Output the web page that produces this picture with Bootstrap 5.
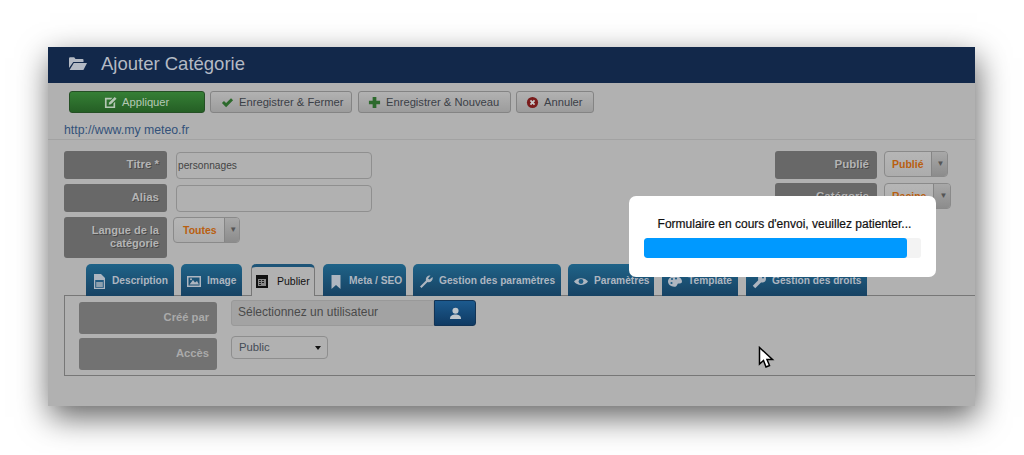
<!doctype html>
<html lang="fr"><head><meta charset="utf-8"><title>Ajouter Catégorie</title>
<link rel="stylesheet" href="https://cdn.jsdelivr.net/npm/bootstrap@5.3.0/dist/css/bootstrap.min.css">
<style>
html,body{height:100%;background:#fff;overflow:hidden}
body{font-family:"Liberation Sans",Arial,sans-serif;font-size:11px;color:#333}
.shot{position:relative;margin:47px 49px 0 48px;height:359px;background:#b1b1b1;box-shadow:2px 11px 30px rgba(0,0,0,.62)}
.head{height:36px;background:#12284a;color:#b4bac4;font-size:18.5px;padding-left:21px;gap:14px}
.head svg{width:18px;height:15px;margin-top:-4px}
.head span{margin-top:-3px}
.bar{padding:8px 21px 0;gap:5px;height:30px}
.tbtn{height:22px;padding:0 9px;font-size:11.2px;line-height:20px;border:1px solid #848484;border-radius:3px;background:linear-gradient(#b2b2b2,#9c9c9c);color:#3b4047;gap:5px;white-space:nowrap}
.tbtn svg{width:13px;height:13px;flex:none}
.tgreen{width:136px;padding-left:34px;background:linear-gradient(#357f35,#255f25);border-color:#255025;color:#b5c7b5}
.tsave{width:142px;padding-left:10px}
.tnew{width:153px;margin-left:1px}
.tno{width:78px}
.url{padding:10px 16px 0;height:27px;color:#33517a;font-size:12.3px;line-height:14px;border-bottom:1px solid #a2a2a2}
.formz{padding:11px 0 0 16px;height:124px}
.lab{width:103px;background:#686868;border-radius:3px;color:#b4b4b4;font-weight:700;font-size:11.5px;text-align:right;padding:0 8px;text-shadow:1px 1px 0 #4a4a4a;line-height:13px}
.h28{height:28px;line-height:27px}
.h41{height:41px;padding-top:7px;font-size:11px}
.fld{width:196px;height:27px;margin:1px 0 0 9px;border:1px solid #8f8f8f;border-radius:4px;background:#b1b1b1;padding:0 1px;font-size:10.2px;color:#444;box-shadow:none}
.fld:focus{background:#b1b1b1;border-color:#8f8f8f;box-shadow:none}
.stack{gap:5px}
.stackr{gap:4px;width:176px;margin-right:24px}
.drop{height:26px;border:1px solid #8a8a8a;border-radius:4px;overflow:hidden;color:#b95f10;font-weight:700;font-size:10.5px;background:linear-gradient(#b6b6b6,#acacac)}
.drop b{padding:0 7px;line-height:24px}
.drop i{width:19px;flex:none;border-left:1px solid #858585;background:linear-gradient(#a8a8a8,#8c8c8c);color:#555;font-style:normal;font-size:8px;line-height:24px;text-align:center}
.langd{margin-left:6px;width:67px}
.langd b{padding-left:9px}
.langd i{width:18px}
.rlab{width:102px;margin-right:7px}
.dpub{width:64px}
.dcat{width:67px}
.tabsz{padding-left:38px;gap:7px;height:32px;position:relative;z-index:1}
.tabz{height:32px;border-radius:5px 5px 0 0;background:linear-gradient(#1f6388,#174263);color:#aeb6c0;font-weight:700;font-size:10.2px;padding:2px 6px 0;gap:6px;white-space:nowrap}
.tabz svg{width:14px;height:15px;flex:none}
.tabz.on{background:#b1b1b1;border:1px solid #777;border-top:3px solid #1d5478;border-bottom:0;color:#111;font-weight:400;padding:0 3px;gap:8px;font-size:10.5px}
.w1{width:88px}.w2{width:61px}.w3{width:64px;margin-left:2px}.w4{width:83px;margin-left:1px}.w5{width:148px}.w6{width:86px}.w7{width:76px;margin-left:1px}.w8{width:121px;margin-left:1px}
.panelz{margin:-1px 0 0 16px;height:81px;border:1px solid #777;border-right:0;padding:6px 14px}
.plab{width:138px;height:32px;background:#727272;border-radius:3px;color:#aaa;font-weight:700;font-size:11.2px;text-align:right;padding:0 8px;line-height:31px}
.pickw{margin:-2px 0 0 14px}
.pick{width:203px;height:26px;background:#a3a3a3;border:1px solid #999;border-radius:3px 0 0 3px;color:#4a4a4a;font-size:12px;padding:0 6px;line-height:22px;white-space:nowrap}
.usr{width:42px;height:26px;border-radius:0 3px 3px 0;background:linear-gradient(#1c5a8e,#0f3a63);border:1px solid #123456}
.usr svg{width:13px;height:13px}
.gapz{gap:4px}
.sel{width:97px;height:23px;margin:-2px 0 0 14px;border:1px solid #8e8e8e;border-radius:4px;padding:0 6px 0 7px;color:#444c56;font-size:11.3px;line-height:21px}
.sel i{border:3px solid transparent;border-top:4px solid #111;border-bottom:0}
.mdl{position:absolute;left:581px;top:149px;width:307px;height:81px;background:#fff;border-radius:7px;padding:22px 15px 0;z-index:5}
.mdl p{margin:0 -2px 8px 2px;font-size:12px;line-height:12px;color:#111;text-align:center;-webkit-text-stroke:.2px #111}
.mdl .progress{height:20px;border-radius:3px;background:#f3f3f3;--bs-progress-bg:#f3f3f3}
.mdl .progress-bar{background:#0099ff;border-radius:3px}
.ptr{position:absolute;left:710px;top:299px;width:17px;height:24px;z-index:6}
</style></head><body>
<div class="shot">
  <div class="head d-flex align-items-center">
    <svg viewBox="0 0 18 15"><path fill="#b4bac4" d="M0 2.500A1.200 1.200 0 0 1 1.200 1.300h4l1.300 1.600h7a1 1 0 0 1 1 1V6H4.300L0 12Z"/><path fill="#b4bac4" d="M4.800 7H18l-3.600 7H.6Z"/></svg>
    <span>Ajouter Catégorie</span>
  </div>
  <div class="bar d-flex align-items-start">
    <button class="btn tbtn tgreen d-flex align-items-center"><svg viewBox="0 0 14 14"><path fill="#b5c7b5" d="M1 2h8L7.500 3.800H2.800v7.400h7.400V8L12 6.300V13H1Z"/><path fill="#b5c7b5" d="M11.500 1 13.500 3 7.500 9 5 9.500 5.500 7Z"/></svg>Appliquer</button>
    <button class="btn tbtn tsave d-flex align-items-center"><svg viewBox="0 0 14 14"><path fill="#2d6a2d" d="M1 7.500 3.200 5.300 5.500 7.600 10.800 2.300 13 4.500 5.500 12Z"/></svg>Enregistrer &amp; Fermer</button>
    <button class="btn tbtn tnew d-flex align-items-center"><svg viewBox="0 0 14 14"><path fill="#2d6a2d" d="M5 1h4v4h4v4H9v4H5V9H1V5h4Z"/></svg>Enregistrer &amp; Nouveau</button>
    <button class="btn tbtn tno d-flex align-items-center"><svg viewBox="0 0 14 14"><circle cx="7" cy="7" r="6" fill="#7a1c1c"/><path stroke="#c9c9c9" stroke-width="2" d="M4.800 4.800l4.400 4.400m0-4.400-4.400 4.400"/></svg>Annuler</button>
  </div>
  <div class="url">http://www.my meteo.fr</div>
  <div class="formz d-flex justify-content-between">
    <div class="d-flex flex-column stack">
      <div class="d-flex"><div class="lab h28">Titre *</div><input class="form-control fld" value="personnages"></div>
      <div class="d-flex"><div class="lab h28">Alias</div><input class="form-control fld"></div>
      <div class="d-flex"><div class="lab h41">Langue de la catégorie</div><div class="drop langd d-flex justify-content-between"><b>Toutes</b><i>▼</i></div></div>
    </div>
    <div class="stackr d-flex flex-column">
      <div class="d-flex"><div class="lab rlab h28">Publié</div><div class="drop dpub d-flex"><b class="flex-grow-1">Publié</b><i>▼</i></div></div>
      <div class="d-flex"><div class="lab rlab h28">Catégorie</div><div class="drop dcat d-flex"><b class="flex-grow-1">Racine</b><i>▼</i></div></div>
    </div>
  </div>
  <div class="tabsz d-flex">
    <div class="tabz w1 d-flex align-items-center"><svg viewBox="0 0 14 15"><path fill="#aeb6c0" d="M2 0h7l4 4v11H2Z"/><path fill="#235a80" d="M3.200 6h8.600v7.800H3.200Z"/><path fill="#8ea0ae" d="M4.200 8h6.600v5H4.200Z"/></svg>Description</div>
    <div class="tabz w2 d-flex align-items-center"><svg viewBox="0 0 14 15"><path fill="#aeb6c0" d="M0 2h14v11H0Zm1.500 1.500v8h11v-8Z"/><path fill="#aeb6c0" d="M2.500 10.500 6 6l2 2.500L10 7l2 3.500Z"/><circle cx="4" cy="5.300" r="1" fill="#aeb6c0"/></svg>Image</div>
    <div class="tabz on w3 d-flex align-items-center"><svg viewBox="0 0 14 15"><path fill="#111" d="M1 1h12v13H1Z"/><path fill="#888" d="M3 5h8v7H3Z"/><path fill="#222" d="M4 6h2v1H4Zm3 0h2v1H7Zm-3 2h2v1H4Zm3 0h2v1H7Zm-3 2h2v1H4Z"/></svg>Publier</div>
    <div class="tabz w4 d-flex align-items-center"><svg viewBox="0 0 14 15"><path fill="#aeb6c0" d="M2.500 1h9v14L7 11l-4.500 4Z"/></svg>Meta / SEO</div>
    <div class="tabz w5 d-flex align-items-center"><svg viewBox="0 0 14 15"><path fill="#aeb6c0" d="M13.500 3 10.500 5.500 9 4.500l2.500-3A4 4 0 0 0 7 6.500L1 12.500 2.500 14l6-6a4 4 0 0 0 5-5Z"/></svg>Gestion des paramètres</div>
    <div class="tabz w6 d-flex align-items-center"><svg viewBox="0 0 14 15"><path fill="#aeb6c0" d="M0 7.500C3 3 11 3 14 7.500 11 12 3 12 0 7.500Z"/><circle cx="7" cy="7.500" r="2.400" fill="#1f5d85"/></svg>Paramètres</div>
    <div class="tabz w7 d-flex align-items-center"><svg viewBox="0 0 14 15"><path fill="#aeb6c0" d="M7 2c4 0 7 2.500 7 5.500 0 2-2 2-3.500 2-1.500 0-1 2-2.500 3C4 13.500 0 11 0 7.500 0 4.500 3 2 7 2Z"/><circle cx="4" cy="5" r="1.100" fill="#1f5d85"/><circle cx="8" cy="4.500" r="1.100" fill="#1f5d85"/><circle cx="3.500" cy="9" r="1.100" fill="#1f5d85"/></svg>Template</div>
    <div class="tabz w8 d-flex align-items-center"><svg viewBox="0 0 14 15"><circle cx="10" cy="4.500" r="4" fill="#aeb6c0"/><path stroke="#aeb6c0" stroke-width="3.500" d="M8 7l-6 6"/><circle cx="11" cy="3.500" r="1" fill="#1f5d85"/></svg>Gestion des droits</div>
  </div>
  <div class="panelz">
    <div class="d-flex gapz flex-column">
      <div class="d-flex"><div class="plab">Créé par</div><div class="d-flex pickw"><div class="pick">Sélectionnez un utilisateur</div><div class="usr d-flex align-items-center justify-content-center"><svg viewBox="0 0 14 14"><circle cx="7" cy="4" r="3.300" fill="#c0c6cc"/><path fill="#c0c6cc" d="M1 13c0-4 3-5 6-5s6 1 6 5Z"/></svg></div></div></div>
      <div class="d-flex"><div class="plab">Accès</div><div class="sel d-flex align-items-center justify-content-between">Public<i></i></div></div>
    </div>
  </div>
  <div class="mdl">
    <p>Formulaire en cours d'envoi, veuillez patienter...</p>
    <div class="progress"><div class="progress-bar" style="width:95%"></div></div>
  </div>
  <svg class="ptr" viewBox="0 0 17 24"><path fill="#fff" stroke="#000" stroke-width="1.500" d="M1.500 1.500V18L5.500 14.500 8 21l3.500-1.500L9 13.500h5.500Z"/></svg>
</div>
<script src="https://cdn.jsdelivr.net/npm/bootstrap@5.3.0/dist/js/bootstrap.bundle.min.js"></script>
</body></html>
